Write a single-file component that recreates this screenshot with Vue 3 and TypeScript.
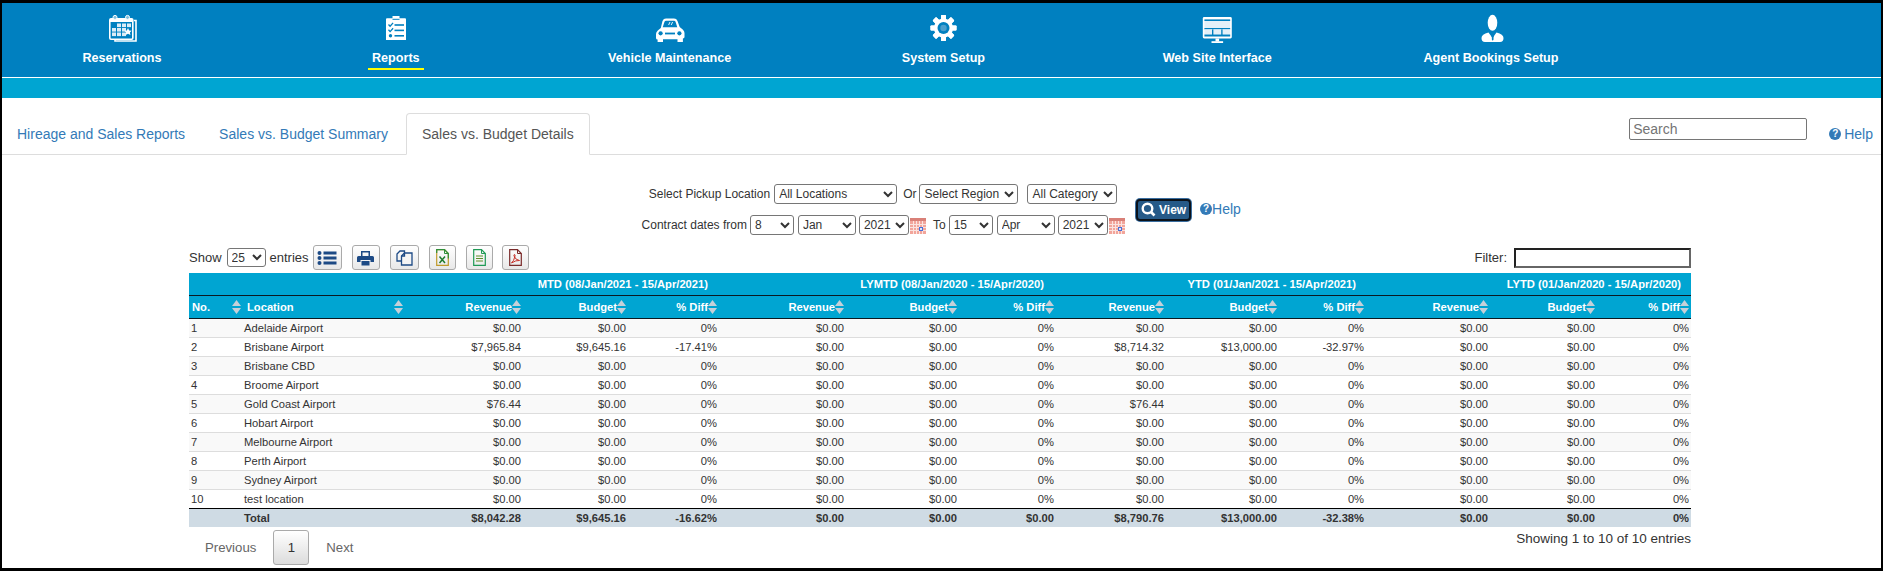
<script setup lang="ts">
const colWidths = [52, 163, 119, 105, 91, 127, 113, 97, 110, 113, 87, 124, 107, 94]
const groups = [
  { label: 'MTD (08/Jan/2021 - 15/Apr/2021)', pad: 11 },
  { label: 'LYMTD (08/Jan/2020 - 15/Apr/2020)', pad: 12 },
  { label: 'YTD (01/Jan/2021 - 15/Apr/2021)', pad: 10 },
  { label: 'LYTD (01/Jan/2020 - 15/Apr/2020)', pad: 10 },
]
const metrics = ['Revenue', 'Budget', '% Diff']
const headCols = [...metrics, ...metrics, ...metrics, ...metrics]
const z = ['$0.00', '$0.00', '0%']
const rows: { no: number; name: string; vals: string[] }[] = [
  { no: 1, name: 'Adelaide Airport', vals: [...z, ...z, ...z, ...z] },
  { no: 2, name: 'Brisbane Airport', vals: ['$7,965.84', '$9,645.16', '-17.41%', ...z, '$8,714.32', '$13,000.00', '-32.97%', ...z] },
  { no: 3, name: 'Brisbane CBD', vals: [...z, ...z, ...z, ...z] },
  { no: 4, name: 'Broome Airport', vals: [...z, ...z, ...z, ...z] },
  { no: 5, name: 'Gold Coast Airport', vals: ['$76.44', '$0.00', '0%', ...z, '$76.44', '$0.00', '0%', ...z] },
  { no: 6, name: 'Hobart Airport', vals: [...z, ...z, ...z, ...z] },
  { no: 7, name: 'Melbourne Airport', vals: [...z, ...z, ...z, ...z] },
  { no: 8, name: 'Perth Airport', vals: [...z, ...z, ...z, ...z] },
  { no: 9, name: 'Sydney Airport', vals: [...z, ...z, ...z, ...z] },
  { no: 10, name: 'test location', vals: [...z, ...z, ...z, ...z] },
]
const totals = ['$8,042.28', '$9,645.16', '-16.62%', '$0.00', '$0.00', '$0.00', '$8,790.76', '$13,000.00', '-32.38%', '$0.00', '$0.00', '0%']
const teeth = [0, 45, 90, 135, 180, 225, 270, 315]
</script>

<template>
  <div class="page">
    <header class="topbar">
      <nav class="mainnav">
        <a class="navitem">
          <svg class="navicon" viewBox="0 0 30 30">
            <path d="M27 6.5h2v20.5H8v-2" fill="none" stroke="#fff" stroke-width="1.6" />
            <rect x="2.8" y="4.8" width="23" height="20.4" rx="1.2" fill="#0080c0" stroke="#fff" stroke-width="1.6" />
            <rect x="3" y="5" width="22.6" height="3" fill="#fff" />
            <circle cx="8" cy="3.4" r="2" fill="#7fbfdf" stroke="#fff" stroke-width="1" />
            <circle cx="20.5" cy="3.4" r="2" fill="#7fbfdf" stroke="#fff" stroke-width="1" />
            <g fill="#dcecf6">
              <rect x="10" y="9.5" width="4" height="3.6" /><rect x="15" y="9.5" width="4" height="3.6" /><rect x="20" y="9.5" width="4" height="3.6" />
              <rect x="5" y="14" width="4" height="3.6" /><rect x="10" y="14" width="4" height="3.6" /><rect x="15" y="14" width="4" height="3.6" />
              <rect x="5" y="18.5" width="4" height="3.6" /><rect x="10" y="18.5" width="4" height="3.6" /><rect x="15" y="18.5" width="4" height="3.6" />
            </g>
            <path d="M21 14l1.2 2.4 2.4.3-1.7 1.8.5 2.6-2.4-1.3-2.4 1.3.5-2.6-1.7-1.8 2.4-.3z" fill="#fff" />
          </svg>
          <span class="navlabel">Reservations</span>
        </a>
        <a class="navitem">
          <svg class="navicon" viewBox="0 0 30 30">
            <path d="M5 5.2q0-1 1-1h5.5V2h7v2.2H24q1 0 1 1V26H5z" fill="#fff" />
            <rect x="11.5" y="4.8" width="7" height="1" fill="#0080c0" />
            <g fill="none" stroke="#0080c0" stroke-width="1.3">
              <path d="M7.5 10.5l1.6 1.8 3-3.4" /><path d="M7.5 15.8l1.6 1.8 3-3.4" />
            </g>
            <g fill="#0080c0">
              <rect x="13.5" y="10.2" width="9.5" height="1.6" /><rect x="13.5" y="15.6" width="9.5" height="1.6" /><rect x="13.5" y="21" width="9.5" height="1.6" />
              <circle cx="9.5" cy="21.8" r="1.7" />
            </g>
          </svg>
          <span class="navlabel nav-active">Reports</span>
        </a>
        <a class="navitem">
          <svg class="navicon" viewBox="0 0 30 30">
            <path d="M7.5 7q1-2.4 3.5-2.4h8q2.5 0 3.5 2.4l2.2 6 3 2.5q1.8 1.6 1.8 3.6v4q0 1.4-1.6 1.5V28h-5.4v-2.8H8V28H2.6v-2.4Q1 25.5 1 24v-4q0-2 1.8-3.6l3-2.5z" fill="#fff" />
            <path d="M9.5 7.8q.4-1 1.5-1h8q1.1 0 1.5 1l1.8 5.4H7.7z" fill="#0080c0" />
            <path d="M13.6 11l1.4-3M16.2 11l1.4-3" stroke="#fff" stroke-width=".9" />
            <circle cx="5.6" cy="19.3" r="2.1" fill="#0080c0" />
            <circle cx="24.4" cy="19.3" r="2.1" fill="#0080c0" />
            <rect x="10" y="18.6" width="10" height="1.8" fill="#0080c0" />
          </svg>
          <span class="navlabel">Vehicle Maintenance</span>
        </a>
        <a class="navitem">
          <svg class="navicon" viewBox="0 0 30 30">
            <g fill="#fff">
              <rect v-for="a in teeth" :key="a" x="13" y="1" width="5" height="26" rx=".8" :transform="`rotate(${a} 15.5 14)`" />
              <circle cx="15.5" cy="14" r="9.6" />
            </g>
            <circle cx="15.5" cy="14" r="6" fill="#0080c0" />
            <circle cx="15.5" cy="14" r="3.2" fill="#4a9fce" />
          </svg>
          <span class="navlabel">System Setup</span>
        </a>
        <a class="navitem">
          <svg class="navicon" viewBox="0 0 30 30">
            <rect x="0.8" y="3" width="29" height="21.5" rx="1.4" fill="#fff" />
            <rect x="2.4" y="5.4" width="25.8" height="1.6" fill="#0080c0" />
            <rect x="2.4" y="7" width="25.8" height="7" fill="#e4f0f8" />
            <rect x="2.4" y="14" width="25.8" height="1.4" fill="#0080c0" />
            <g fill="#e4f0f8"><rect x="2.4" y="15.4" width="7.6" height="5" /><rect x="11.4" y="15.4" width="7.8" height="5" /><rect x="20.6" y="15.4" width="7.6" height="5" /></g>
            <path d="M2.4 20.4h25.8v2.2H2.4zM10 15.4h1.4v5H10zM19.2 15.4h1.4v5h-1.4z" fill="#0080c0" />
            <rect x="13.5" y="24.5" width="3.6" height="3" fill="#fff" />
            <rect x="9.5" y="27.2" width="11.6" height="1.8" fill="#fff" />
          </svg>
          <span class="navlabel">Web Site Interface</span>
        </a>
        <a class="navitem">
          <svg class="navicon" viewBox="0 0 30 30">
            <ellipse cx="16.5" cy="8.8" rx="4.800" ry="8" fill="#fff" />
            <path d="M12.500 18.500q-7 1.500-7 5.500 0 4 3.500 4h15q3.500 0 3.500-4 0-4-7-5.500l-4 5.500z" fill="#fff" />
            <path d="M15.300 20.500h2.400l.5 1.200-.6 1-.1 3-.8 1-.8-1-.1-3-.6-1z" fill="#0080c0" />
          </svg>
          <span class="navlabel">Agent Bookings Setup</span>
        </a>
      </nav>
    </header>
    <div class="subbar"></div>

    <section class="tabrow">
      <div class="tabs">
        <a class="tab">Hireage and Sales Reports</a>
        <a class="tab">Sales vs. Budget Summary</a>
        <a class="tab tab-active">Sales vs. Budget Details</a>
      </div>
      <div class="tabtools">
        <input class="search" type="text" placeholder="Search" />
        <a class="helplink"><span class="qmark">?</span> Help</a>
      </div>
    </section>

    <section class="criteria">
      <div class="critform">
        <div class="critrow">
          <span>Select Pickup Location</span>
          <select class="sel w-loc"><option>All Locations</option></select>
          <span class="or">Or</span>
          <select class="sel w-reg"><option>Select Region</option></select>
          <select class="sel w-cat"><option>All Category</option></select>
        </div>
        <div class="critrow second">
          <span>Contract dates from</span>
          <select class="sel w-day"><option>8</option></select>
          <select class="sel w-mon"><option>Jan</option></select>
          <select class="sel w-yr"><option>2021</option></select>
          <svg class="cal" viewBox="0 0 16 16">
            <rect x="0" y="0" width="16" height="16" fill="#f2a59b" />
            <rect x="0" y="0" width="16" height="3" fill="#d98078" />
            <path d="M0 6.500h16M0 9.500h16M0 12.500h16M3.500 3v13M6.500 3v13M9.500 3v13M12.500 3v13" stroke="#fbe3df" stroke-width="1" />
            <rect x="9" y="9" width="4" height="4" fill="#4a6fd8" />
            <rect x="10" y="10" width="2" height="2" fill="#dfe6fa" />
          </svg>
          <span class="to">To</span>
          <select class="sel w-day"><option>15</option></select>
          <select class="sel w-mon"><option>Apr</option></select>
          <select class="sel w-yr"><option>2021</option></select>
          <svg class="cal" viewBox="0 0 16 16">
            <rect x="0" y="0" width="16" height="16" fill="#f2a59b" />
            <rect x="0" y="0" width="16" height="3" fill="#d98078" />
            <path d="M0 6.500h16M0 9.500h16M0 12.500h16M3.500 3v13M6.500 3v13M9.500 3v13M12.500 3v13" stroke="#fbe3df" stroke-width="1" />
            <rect x="9" y="9" width="4" height="4" fill="#4a6fd8" />
            <rect x="10" y="10" width="2" height="2" fill="#dfe6fa" />
          </svg>
        </div>
      </div>
      <button class="viewbtn" type="button">
        <svg width="15" height="15" viewBox="0 0 15 15">
          <circle cx="6.500" cy="6.500" r="4.800" fill="none" stroke="#fff" stroke-width="2.400" />
          <path d="M10 10l3.500 3.500" stroke="#fff" stroke-width="2.600" />
        </svg>
        <span>View</span>
      </button>
      <a class="helplink crit-help"><span class="qmark">?</span>Help</a>
    </section>

    <section class="report">
      <div class="toolbar">
        <div class="tb-left">
          <span>Show</span>
          <select class="sel w-len"><option>25</option></select>
          <span>entries</span>
          <button class="tool t-list" type="button">
            <svg width="20" height="16" viewBox="0 0 20 16" fill="#1d4a85">
              <circle cx="2.500" cy="3" r="2" /><circle cx="2.500" cy="8" r="2" /><circle cx="2.500" cy="13" r="2" />
              <rect x="6.500" y="1.500" width="13" height="3" /><rect x="6.500" y="6.500" width="13" height="3" /><rect x="6.500" y="11.500" width="13" height="3" />
            </svg>
          </button>
          <button class="tool t-print" type="button">
            <svg width="17" height="16" viewBox="0 0 17 16" fill="#1d4a85">
              <path d="M4 6V1h9v5h-1.500V2.500h-6V6z" />
              <path d="M1.500 6h14q1.500 0 1.500 1.500V12h-3.500v-2h-10v2H0V7.500Q0 6 1.500 6z" />
              <path d="M4.500 11h8v4.500h-8z" />
            </svg>
          </button>
          <button class="tool t-copy" type="button">
            <svg width="17" height="17" viewBox="0 0 17 17" fill="none" stroke="#1d4a85" stroke-width="1.300">
              <path d="M1 5l3-3h4.500v10H1z" />
              <path d="M5.500 7l3-3h7.500v12H5.500z" fill="#f4f4f4" />
              <path d="M8.500 4v3h-3" />
            </svg>
          </button>
          <button class="tool t-xls" type="button">
            <svg width="13" height="17" viewBox="0 0 13 17" fill="none">
              <path d="M.7.700h7.800l3.800 3.800v11.800H.7z" stroke="#c09a2c" stroke-width="1.200" />
              <path d="M8.500.700v3.800h3.800" stroke="#2f8f3a" stroke-width="1" />
              <path d="M.7 4V.700h7.800l3.800 3.800v5" stroke="#2f8f3a" stroke-width="1.200" />
              <path d="M3.500 7.500l5.500 6.500M9 7.500l-5.500 6.500" stroke="#1f7a2c" stroke-width="1.500" />
            </svg>
          </button>
          <button class="tool t-txt" type="button">
            <svg width="13" height="17" viewBox="0 0 13 17" fill="none">
              <path d="M.7.700h7.800l3.800 3.800v11.800H.7z" stroke="#1f9a55" stroke-width="1.200" />
              <path d="M8.500.700v3.800h3.800" stroke="#1f9a55" stroke-width="1" />
              <path d="M3 7h7M3 9.500h7M3 12h7" stroke="#5d8f2a" stroke-width="1.200" />
            </svg>
          </button>
          <button class="tool t-pdf" type="button">
            <svg width="13" height="17" viewBox="0 0 13 17" fill="none">
              <path d="M.7.700h7.800l3.800 3.800v11.800H.7z" stroke="#7a2a2a" stroke-width="1.200" />
              <path d="M8.500.700v3.800h3.800" stroke="#7a2a2a" stroke-width="1" />
              <path d="M2.500 14q2.500-2 3.500-7 .3-1.500-.5-1.500T5 7q1.500 4 5.500 4.500-3.500-.5-8 2.500z" stroke="#c8322b" stroke-width="1" />
            </svg>
          </button>
        </div>
        <label class="filter">
          <span>Filter:</span>
          <input class="filterinput" type="text" />
        </label>
      </div>

      <table class="grid">
        <colgroup>
          <col v-for="(w, i) in colWidths" :key="i" :style="{ width: w + 'px' }" />
        </colgroup>
        <thead>
          <tr class="grouprow">
            <th colspan="2"></th>
            <th v-for="g in groups" :key="g.label" colspan="3" class="grp" :style="{ paddingRight: g.pad + 'px' }">{{ g.label }}</th>
          </tr>
          <tr class="headrow">
            <th class="th-no">
              <div class="th-in between">No.
                <svg class="sort" viewBox="0 0 9 14"><path d="M0 6L4.500 0 9 6zM0 8l4.500 6L9 8z" /></svg>
              </div>
            </th>
            <th class="th-loc">
              <div class="th-in between">Location
                <svg class="sort" viewBox="0 0 9 14"><path d="M0 6L4.500 0 9 6zM0 8l4.500 6L9 8z" /></svg>
              </div>
            </th>
            <th v-for="(m, i) in headCols" :key="i" class="th-num">
              <div class="th-in end">{{ m }}
                <svg class="sort" viewBox="0 0 9 14"><path d="M0 6L4.500 0 9 6zM0 8l4.500 6L9 8z" /></svg>
              </div>
            </th>
          </tr>
        </thead>
        <tbody>
          <tr v-for="r in rows" :key="r.no" class="datarow">
            <td class="c-no">{{ r.no }}</td>
            <td class="c-loc">{{ r.name }}</td>
            <td v-for="(v, i) in r.vals" :key="i" class="c-num">{{ v }}</td>
          </tr>
        </tbody>
        <tfoot>
          <tr class="totalrow">
            <td></td>
            <td class="c-loc">Total</td>
            <td v-for="(v, i) in totals" :key="i" class="c-num">{{ v }}</td>
          </tr>
        </tfoot>
      </table>

      <div class="tablefoot">
        <div class="pager">
          <a class="pg-link prev">Previous</a>
          <a class="pg-cur">1</a>
          <a class="pg-link">Next</a>
        </div>
        <div class="info">Showing 1 to 10 of 10 entries</div>
      </div>
    </section>
  </div>
</template>

<style>
html, body { margin: 0; padding: 0; background: #fff; }
</style>

<style scoped>
.page {
  box-sizing: border-box;
  width: 1883px;
  height: 571px;
  overflow: hidden;
  border: solid #000;
  border-width: 3px 2px;
  background: #fff;
  font-family: "Liberation Sans", Arial, sans-serif;
  font-size: 12px;
  color: #333;
}
.topbar { height: 74px; background: #0080c0; border-bottom: 1px solid #fff; }
.mainnav { display: flex; gap: 113.8px; padding-left: 40px; }
.navitem { width: 160px; display: flex; flex-direction: column; align-items: center; color: #fff; }
.navicon { width: 30px; height: 30px; margin-top: 11px; display: block; }
.navlabel { margin-top: 5px; padding: 0 4px 1px; font-size: 12.6px; font-weight: bold; line-height: 18px; border-bottom: 2px solid transparent; }
.nav-active { border-bottom-color: #ffff00; }
.subbar { height: 20px; background: #00a5d2; }

.tabrow { display: flex; justify-content: space-between; margin-top: 15px; height: 41px; border-bottom: 1px solid #ddd; }
.tabs { display: flex; margin-left: -1px; }
.tab { box-sizing: border-box; height: 42px; padding: 10px 15px; margin-right: 2px; border: 1px solid transparent; border-radius: 4px 4px 0 0; font-size: 14px; line-height: 20px; color: #337ab7; }
.tab-active { color: #555; background: #fff; border-color: #ddd #ddd #fff; }
.tabtools { display: flex; align-items: flex-start; padding-right: 8px; }
.search { box-sizing: border-box; width: 178px; height: 22px; margin-top: 5px; padding: 1px 3px; border: 1px solid #767676; border-radius: 2px; font: 14px "Liberation Sans", Arial, sans-serif; }
.search::placeholder { color: #757575; }
.helplink { display: inline-flex; align-items: center; font-size: 14px; line-height: 20px; color: #337ab7; }
.tabtools .helplink { margin: 11px 0 0 22px; gap: 3px; }
.qmark { display: inline-block; width: 12px; height: 12px; border-radius: 50%; background: #337ab7; color: #fff; font-size: 10px; font-weight: bold; line-height: 12px; text-align: center; }

.criteria { display: flex; justify-content: center; align-items: center; margin-top: 29px; height: 51px; }
.critform { display: flex; flex-direction: column; align-items: center; width: 482px; gap: 11px; }
.critrow { display: flex; align-items: center; height: 20px; white-space: nowrap; }
.sel { box-sizing: border-box; height: 20px; padding: 0; margin: 0; border: 1px solid #767676; border-radius: 3px; background: #fff; color: #333; font: 12px "Liberation Sans", Arial, sans-serif; }
.w-loc { width: 123px; margin-left: 4px; }
.or { margin: 0 3px 0 6px; }
.w-reg { width: 99px; }
.w-cat { width: 90px; margin-left: 9px; }
.w-day { width: 44px; margin-left: 3px; }
.w-mon { width: 58px; margin-left: 4px; }
.w-yr { width: 50px; margin-left: 3px; }
.cal { width: 16px; height: 16px; margin: 2px 0 0 1px; flex: none; }
.to { margin-left: 7px; }
.viewbtn { box-sizing: border-box; display: flex; align-items: center; justify-content: center; gap: 3px; width: 55px; height: 22px; margin: 0 0 0 12px; padding: 0; background: #265a88; border: 2px solid #0b121a; border-radius: 4px; box-shadow: 0 0 0 1px #3a6ea0; color: #fff; font: bold 12px "Liberation Sans", Arial, sans-serif; }
.crit-help { margin-left: 9px; margin-top: -1px; gap: 0; }

.report { width: 1502px; margin: 10px 0 0 187px; }
.toolbar { display: flex; justify-content: space-between; align-items: center; height: 25px; margin-bottom: 3px; font-size: 13px; }
.tb-left { display: flex; align-items: center; height: 25px; }
.w-len { width: 39px; height: 19px; margin: 0 4px 0 5px; }
.tool { box-sizing: border-box; display: flex; align-items: center; justify-content: center; height: 25px; padding: 0; margin: 0; border: 1px solid #aaa; border-radius: 3px; background: linear-gradient(#fff, #e8e8e8); }
.t-list { width: 29px; margin-left: 4px; }
.t-print { width: 28px; margin-left: 10px; }
.t-copy { width: 29px; margin-left: 10px; }
.t-xls { width: 27px; margin-left: 10px; }
.t-txt { width: 27px; margin-left: 10px; }
.t-pdf { width: 27px; margin-left: 9px; }
.filter { display: flex; align-items: center; }
.filterinput { box-sizing: border-box; width: 177px; height: 20px; margin: 0 0 0 7px; padding: 0 2px; border: 2px solid; border-color: #222 #666 #666 #222; background: #fff; }

.grid { width: 1502px; table-layout: fixed; border-collapse: separate; border-spacing: 0; font-size: 11.2px; line-height: 13px; }
.grid th { background: #00a5d2; color: #fff; font-weight: bold; padding: 0; box-sizing: border-box; border-bottom: 1px solid #0a1a22; }
.grouprow th { height: 23px; text-align: right; }
.headrow th { height: 23px; }
.th-in { display: flex; align-items: center; white-space: nowrap; }
.between { justify-content: space-between; }
.end { justify-content: flex-end; }
.sort { width: 9px; height: 14px; fill: #c5d0d8; flex: none; }
.th-no .th-in { padding-left: 3px; padding-right: 0; }
.th-loc .th-in { padding-left: 6px; padding-right: 1px; }
.th-num .th-in { padding-right: 2px; }
.grid td { box-sizing: border-box; padding: 0; white-space: nowrap; }
.datarow td { height: 19px; border-bottom: 1px solid #ddd; }
.datarow:nth-child(odd) td { background: #f9f9f9; }
.datarow:last-child td { border-bottom-color: #000; }
.c-no { padding-left: 2px !important; }
.c-loc { padding-left: 3px !important; }
.c-num { text-align: right; padding-right: 2px !important; }
.totalrow td { height: 18px; background: #cfdbe4; font-weight: bold; }

.tablefoot { display: flex; justify-content: space-between; align-items: flex-start; }
.pager { display: flex; align-items: center; margin-top: 3px; padding-left: 16px; font-size: 13.2px; }
.pg-link { color: #666; }
.prev { margin-right: 17px; }
.pg-cur { box-sizing: border-box; width: 36px; height: 35px; margin-right: 17px; border: 1px solid #aaa; border-radius: 3px; background: linear-gradient(#fff, #dcdcdc); color: #333; text-align: center; line-height: 33px; }
.info { margin-top: 3px; font-size: 13.5px; line-height: 18px; color: #333; }
</style>
